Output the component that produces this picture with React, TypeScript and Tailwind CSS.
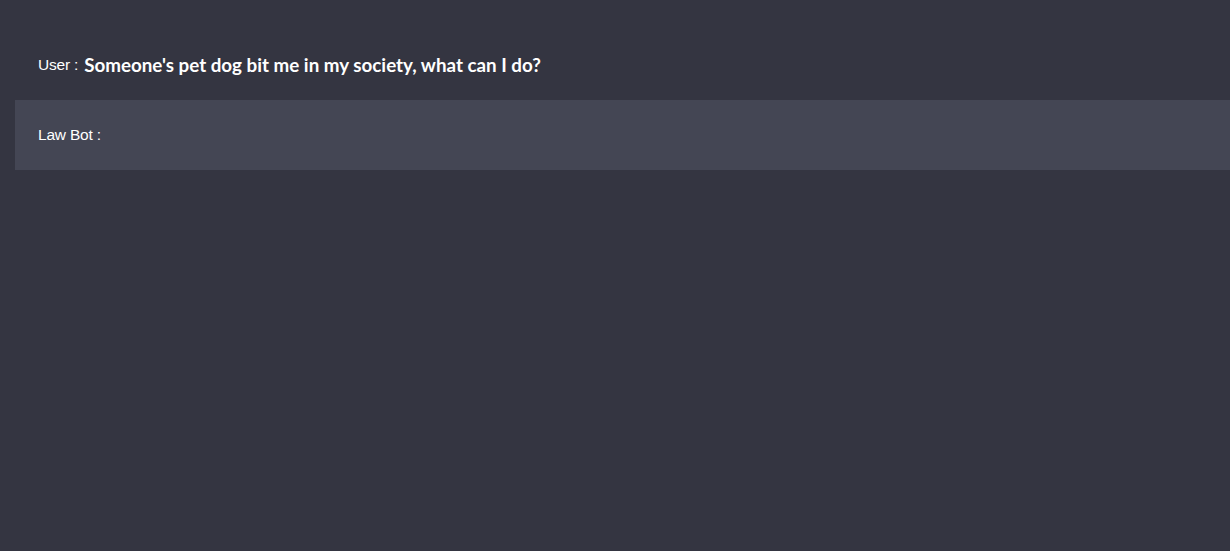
export default function App() {
  return (
    <div className="h-[551px] w-full bg-[#343541] pt-[30px] pl-[15px] font-['Liberation_Sans',Arial,sans-serif] text-white">
      <div className="flex h-[70px] items-center px-[23px]">
        <span className="text-[15.5px] tracking-[-0.2px]">User :</span>
        <span className="ml-[6px] font-['Lato',sans-serif] text-[18.8px] font-bold">
          Someone's pet dog bit me in my society, what can I do?
        </span>
      </div>
      <div className="flex h-[70px] items-center bg-[#444654] px-[23px]">
        <span className="text-[15.5px] tracking-[-0.2px]">Law Bot :</span>
      </div>
    </div>
  )
}
